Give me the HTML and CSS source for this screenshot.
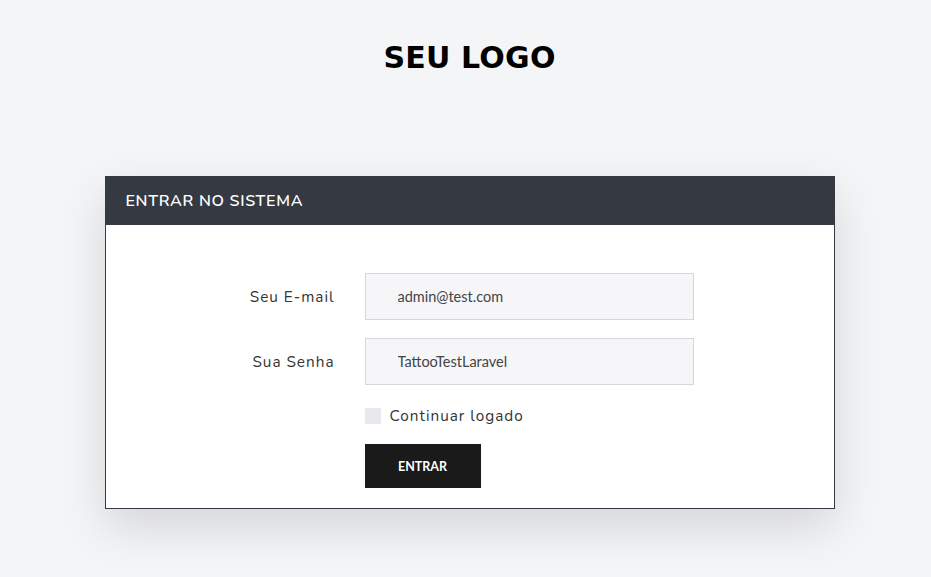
FILE: index.html
```html
<!DOCTYPE html>
<html lang="pt">
<head>
<meta charset="utf-8">
<title>Login</title>
<link rel="stylesheet" href="styles.css">
</head>
<body>
<div class="page">
  <h1 class="logo">SEU LOGO</h1>
  <div class="card">
    <div class="card-header">ENTRAR NO SISTEMA</div>
    <form class="card-body">
      <label class="label" for="email">Seu E-mail</label>
      <input class="input" id="email" type="text" value="admin@test.com">
      <label class="label" for="senha">Sua Senha</label>
      <input class="input" id="senha" type="text" value="TattooTestLaravel">
      <div class="check-row">
        <span class="checkbox"></span>
        <span class="check-label">Continuar logado</span>
      </div>
      <div class="btn-row">
        <button class="btn" type="button">ENTRAR</button>
      </div>
    </form>
  </div>
</div>
</body>
</html>
```

FILE: styles.css
```css
html, body {
  margin: 0;
  padding: 0;
  background: #f4f5f7;
}
body {
  font-family: "Nunito", "Lato", "Open Sans", sans-serif;
  color: #333;
}
.page {
  display: flex;
  flex-direction: column;
  align-items: center;
  padding-top: 40px;
  padding-left: 8px;
  min-height: 100vh;
  box-sizing: border-box;
}
.logo {
  margin: 0;
  font-family: "DejaVu Sans", sans-serif;
  font-weight: bold;
  font-size: 30px;
  line-height: 36px;
  letter-spacing: 0.2px;
  color: #000;
}
.card {
  margin-top: 100px;
  width: 728px;
  border: 1px solid #353a42;
  background: #fff;
  box-shadow: 0 18px 45px rgba(0, 0, 0, 0.13);
}
.card-header {
  background: #353a42;
  color: #fff;
  height: 48px;
  box-sizing: border-box;
  padding: 0 20px 1px;
  display: flex;
  align-items: center;
  font-size: 16px;
  font-weight: 600;
  letter-spacing: 0.7px;
}
.card-body {
  display: grid;
  grid-template-columns: 229px 329px;
  column-gap: 30px;
  row-gap: 18px;
  padding: 48px 0 20px;
  margin: 0;
}
.label {
  justify-self: end;
  align-self: center;
  font-size: 15.3px;
  letter-spacing: 1px;
  color: #333;
}
.input {
  height: 47px;
  box-sizing: border-box;
  border: 1px solid #d5d6d9;
  background: #f6f6f8;
  padding: 0 32px;
  font-family: "Lato", "Open Sans", sans-serif;
  font-size: 14.5px;
  color: #444;
  outline: none;
}
.check-row {
  grid-column: 2;
  display: flex;
  align-items: center;
  gap: 9px;
  margin-top: 3px;
}
.checkbox {
  width: 16px;
  height: 16px;
  background: #e8e9ec;
}
.check-label {
  font-size: 15.3px;
  letter-spacing: 1px;
  color: #333;
}
.btn-row {
  grid-column: 2;
}
.btn {
  display: block;
  width: 116px;
  height: 44px;
  border: 0;
  background: #1a1a1a;
  color: #fff;
  font-family: "Lato", "Open Sans", sans-serif;
  font-weight: bold;
  font-size: 12.5px;
}
```
